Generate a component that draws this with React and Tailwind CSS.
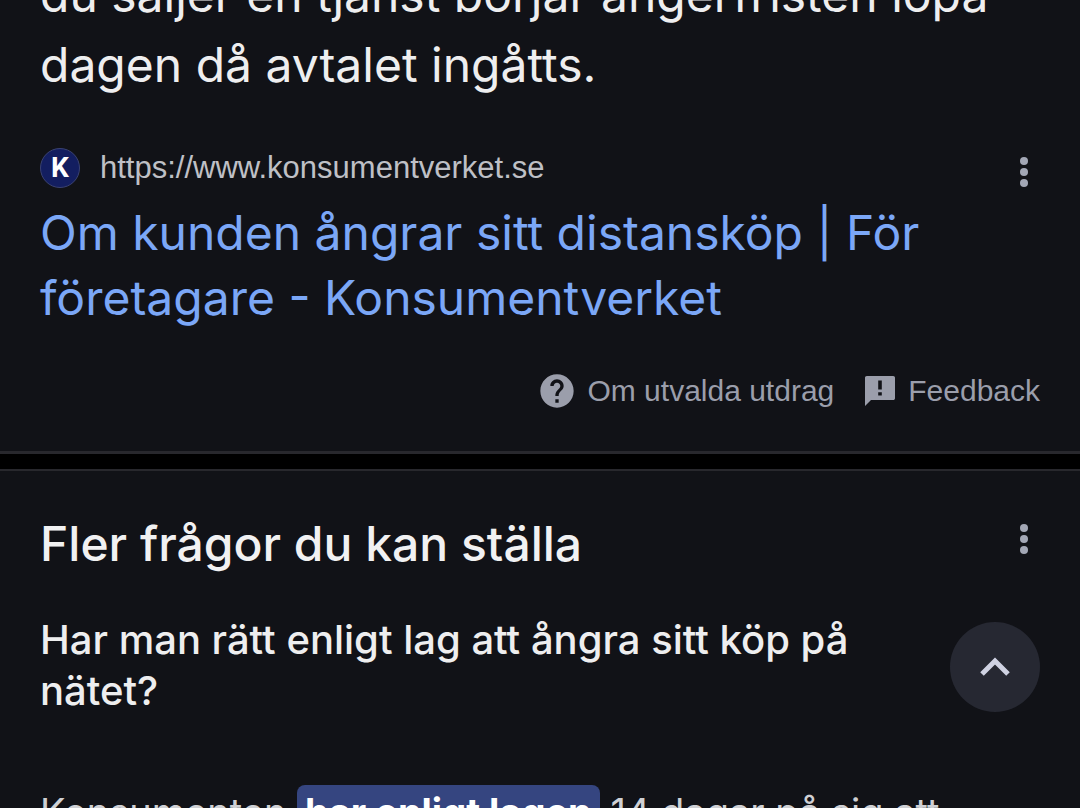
import React from "react";

const MoreButton = ({ label }) => (
  <button type="button" aria-label={label} className="flex w-8 shrink-0 justify-center text-[#a3a7b5]">
    <svg className="h-8 w-2" viewBox="0 0 8 32" fill="currentColor">
      <circle cx="4" cy="5" r="4" />
      <circle cx="4" cy="16" r="4" />
      <circle cx="4" cy="27" r="4" />
    </svg>
  </button>
);

const HelpIcon = () => (
  <svg className="h-10 w-10 shrink-0" viewBox="0 0 24 24" fill="currentColor">
    <path d="M12 2C6.48 2 2 6.48 2 12s4.48 10 10 10 10-4.48 10-10S17.52 2 12 2zm1 17h-2v-2h2v2zm2.07-7.75l-.9.92C13.45 12.9 13 13.5 13 15h-2v-.5c0-1.1.45-2.1 1.17-2.83l1.24-1.26c.37-.36.59-.86.59-1.41 0-1.1-.9-2-2-2s-2 .9-2 2H8c0-2.21 1.79-4 4-4s4 1.79 4 4c0 .88-.36 1.68-.93 2.25z" />
  </svg>
);

const FeedbackIcon = () => (
  <svg className="h-9 w-9 shrink-0" viewBox="0 0 24 24" fill="currentColor">
    <path d="M20.8 2H3.2C2.5 2 2 2.5 2 3.2V22l4-4h14.800c.7 0 1.200-.5 1.200-1.200V3.200c0-.7-.5-1.200-1.200-1.200zM13.200 15h-2.400v-2.200h2.400V15zm0-4h-2.400V5h2.400v6z" />
  </svg>
);

const FeaturedSnippet = () => (
  <section className="border-b-3 border-[#28282d] px-10 pb-10">
    {/* The answer is scrolled partly out of view */}
    <p className="-mt-10 text-[48px] leading-[70px] text-[#eeeeef]">
      du säljer en tjänst börjar ångerfristen löpa
      <br />
      dagen då avtalet ingåtts.
    </p>

    <div className="mt-12 flex items-end justify-between">
      <div className="flex items-center gap-5 pb-2">
        <span className="flex h-10 w-10 items-center justify-center rounded-full border border-[#3a4272] bg-[#131e60] font-['Roboto',sans-serif] text-[28px] leading-none font-bold text-white">
          K
        </span>
        <cite className="font-['Liberation_Sans',sans-serif] text-[31px] leading-10 text-[#bfc0c6] not-italic">
          https://www.konsumentverket.se
        </cite>
      </div>
      <div className="pb-2">
        <MoreButton label="Mer om resultatet" />
      </div>
    </div>

    <h3 className="mt-1 text-[48px] leading-[65px] text-[#7ba7f7]">
      <a href="#konsumentverket">
        Om kunden ångrar sitt distansköp | För
        <br />
        företagare - Konsumentverket
      </a>
    </h3>

    <div className="mt-[41px] flex items-center justify-end gap-7 font-['Liberation_Sans',sans-serif] text-[30px] leading-10 text-[#9b9eab]">
      <a href="#om" className="flex items-center gap-2.5">
        <HelpIcon />
        Om utvalda utdrag
      </a>
      <a href="#feedback" className="flex items-center gap-2.5">
        <FeedbackIcon />
        Feedback
      </a>
    </div>
  </section>
);

const RelatedQuestions = () => (
  <section className="border-t-2 border-[#28282d] px-10 pt-10">
    <div className="flex items-start justify-between">
      <h2 className="text-[48px] leading-[65px] font-medium text-[#f1f1f2]">Fler frågor du kan ställa</h2>
      <div className="pt-3">
        <MoreButton label="Mer om frågorna" />
      </div>
    </div>
    <h3 className="mt-[38px] text-[40px] leading-[51px] font-medium text-[#eeeeef]">
      Har man rätt enligt lag att ångra sitt köp på
      <br />
      nätet?
    </h3>
    <p className="mt-[68px] text-[38px] leading-[56px] whitespace-nowrap text-[#cfd0d4]">
      Konsumenten{" "}
      <mark className="rounded-lg bg-[#354580] px-2 py-1 font-bold text-white">har enligt lagen</mark>{" "}
      14 dagar på sig att
    </p>
  </section>
);

export default function App() {
  return (
    <div className="h-screen overflow-hidden bg-black font-['Inter',sans-serif]">
      <main className="flex min-h-full flex-col gap-[15px]">
        <div className="bg-[#111217]">
          <FeaturedSnippet />
        </div>
        <div className="grow bg-[#111217]">
          <RelatedQuestions />
        </div>
      </main>

      <button
        type="button"
        aria-label="Till toppen"
        className="fixed right-10 bottom-24 flex h-[90px] w-[90px] items-center justify-center rounded-full bg-[#262832] text-[#cfd2e2]"
      >
        <svg className="h-8 w-8" viewBox="0 0 32 32" fill="none" stroke="currentColor" strokeWidth="5">
          <path d="M3 23 16 10l13 13" />
        </svg>
      </button>
    </div>
  );
}
